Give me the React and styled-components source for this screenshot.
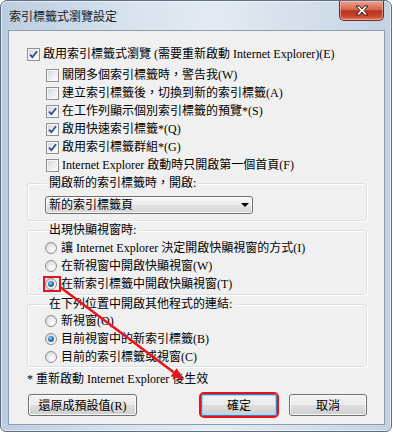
import React from "react";
import styled, { createGlobalStyle, css } from "styled-components";

const UI_FONT = `"Liberation Serif", "Noto Sans CJK TC", serif`;

const GlobalStyle = createGlobalStyle`
  html, body {
    margin: 0;
    padding: 0;
    background: #ffffff;
  }
  body {
    font-family: ${UI_FONT};
    font-size: 12px;
    color: #000;
  }
`;

const Window = styled.div`
  position: relative;
  width: 392px;
  height: 432px;
  box-sizing: border-box;
  border: 1px solid #5d6f83;
  border-radius: 7px 7px 6px 6px;
  background: linear-gradient(
    to right,
    #bccde0 0%,
    #d9e4ef 35%,
    #e3eaf2 55%,
    #d2deea 80%,
    #c2d2e4 100%
  );
  box-shadow: inset 0 0 0 1px rgba(255, 255, 255, 0.55);
  display: flex;
  flex-direction: column;
`;

const TitleBar = styled.div`
  height: 29px;
  display: flex;
  align-items: center;
  padding: 0 7px 0 8px;
`;

const TitleText = styled.span`
  flex: 1;
  font-family: "Noto Sans CJK TC", sans-serif;
  font-size: 12px;
  line-height: 16px;
  color: #1a1a1a;
`;

const CloseButton = styled.div`
  align-self: flex-start;
  width: 45px;
  height: 20px;
  box-sizing: border-box;
  border: 1px solid #6e2b22;
  border-top: none;
  border-radius: 0 0 5px 5px;
  background: linear-gradient(
    #eaa491 0%,
    #d5644d 45%,
    #b9341e 52%,
    #c8462d 80%,
    #de7d60 100%
  );
  box-shadow: inset 0 0 0 1px rgba(255, 210, 190, 0.5);
  display: flex;
  align-items: center;
  justify-content: center;
`;

const ClientArea = styled.div`
  flex: 1;
  margin: 0 6px 6px 7px;
  border: 1px solid #8d9db0;
  background: #f0f0f0;
  padding: 14px 17px 0 18px;
  display: flex;
  flex-direction: column;
  font-family: ${UI_FONT};
  font-size: 12px;
`;

const CheckRow = styled.div`
  display: flex;
  align-items: center;
  height: 18px;
  line-height: 18px;
  white-space: nowrap;
  padding-left: ${(p) => (p.$sub ? 19 : 0)}px;
  margin-bottom: ${(p) => (p.$main ? 3 : 0)}px;
`;

const CheckBox = styled.span`
  width: 13px;
  height: 13px;
  box-sizing: border-box;
  flex-shrink: 0;
  margin-right: 3px;
  border: 1px solid #8e8f8f;
  background: linear-gradient(135deg, #cfd3d8 0%, #e9ebee 50%, #fdfdfd 100%);
  box-shadow: inset 0 0 0 1px #f6f6f6;
  display: flex;
  align-items: center;
  justify-content: center;
`;

const Group = styled.fieldset`
  margin: 2px 0 0 0;
  padding: ${(p) => p.$pad};
  border: 1px solid #d9e1e6;
  border-radius: 3px;
  box-shadow: 1px 1px 0 #ffffff, inset 1px 1px 0 #ffffff;
  min-width: 0;
`;

const Legend = styled.legend`
  margin-left: 2px;
  padding: 0 2px;
  height: 14px;
  line-height: 14px;
  background: #f0f0f0;
  white-space: nowrap;
`;

const Dropdown = styled.div`
  width: 208px;
  height: 18px;
  box-sizing: border-box;
  border: 1px solid #707070;
  border-radius: 3px;
  background: linear-gradient(#f6f6f6 0%, #ededed 50%, #e2e2e2 51%, #d6d6d6 100%);
  box-shadow: inset 0 0 0 1px rgba(255, 255, 255, 0.75);
  display: flex;
  align-items: center;
  padding: 0 3px 0 3px;
  line-height: 16px;
`;

const DropdownText = styled.span`
  flex: 1;
`;

const DropArrow = styled.span`
  width: 0;
  height: 0;
  border-left: 4px solid transparent;
  border-right: 4px solid transparent;
  border-top: 4px solid #000;
`;

const RadioRow = styled.div`
  display: flex;
  align-items: center;
  height: 18px;
  line-height: 18px;
  white-space: nowrap;
`;

const RadioWrap = styled.span`
  position: relative;
  display: flex;
  margin-right: 4px;
  flex-shrink: 0;
`;

const Radio = styled.span`
  position: relative;
  width: 12px;
  height: 12px;
  box-sizing: border-box;
  border-radius: 50%;
  border: 1px solid #8e8f8f;
  background: radial-gradient(circle at 65% 70%, #ffffff 0%, #ececec 45%, #cacaca 100%);
  ${(p) =>
    p.$checked &&
    css`
      &::after {
        content: "";
        position: absolute;
        left: 2px;
        top: 2px;
        width: 6px;
        height: 6px;
        border-radius: 50%;
        background: radial-gradient(circle at 40% 35%, #9ad6f7 0%, #2b7bb9 45%, #0d3f6a 100%);
      }
    `}
`;

const MarkBox = styled.span`
  position: absolute;
  left: -2px;
  top: -2px;
  width: 18px;
  height: 16px;
  box-sizing: border-box;
  border: 2px solid #e8101a;
`;

const Note = styled.div`
  margin-top: 3px;
  height: 18px;
  line-height: 18px;
  white-space: nowrap;
`;

const ButtonRow = styled.div`
  margin-top: 6px;
  display: flex;
  align-items: center;
  padding-left: 1px;
`;

const Button = styled.button`
  width: ${(p) => p.$w}px;
  height: 22px;
  box-sizing: border-box;
  padding: 0;
  border: 1px solid #707070;
  border-radius: 3px;
  background: linear-gradient(#f2f2f2 0%, #ebebeb 50%, #dddddd 51%, #cfcfcf 100%);
  box-shadow: inset 0 0 0 1px #fbfbfb;
  font-family: ${UI_FONT};
  font-size: 12px;
  color: #000;
  margin-left: ${(p) => p.$ml || 0}px;
  ${(p) =>
    p.$default &&
    css`
      border-color: #3c7fb1;
      box-shadow: inset 0 0 0 1px #9fdcf7;
    `}
  ${(p) =>
    p.$marked &&
    css`
      outline: 2px solid #e8101a;
      outline-offset: 0;
    `}
`;

const Overlay = styled.svg`
  position: absolute;
  left: -1px;
  top: -1px;
  pointer-events: none;
`;

const Tick = () => (
  <svg width="9" height="9" viewBox="0 0 9 9">
    <path d="M1 4.6 L3.4 7.2 L8 1.2" fill="none" stroke="#2f4c8c" strokeWidth="1.8" />
  </svg>
);

const Check = ({ checked, sub, main, children }) => (
  <CheckRow $sub={sub} $main={main}>
    <CheckBox>{checked && <Tick />}</CheckBox>
    <span>{children}</span>
  </CheckRow>
);

const RadioItem = ({ checked, marked, children }) => (
  <RadioRow>
    <RadioWrap>
      <Radio $checked={checked} />
      {marked && <MarkBox />}
    </RadioWrap>
    <span>{children}</span>
  </RadioRow>
);

export default function App() {
  return (
    <>
      <GlobalStyle />
      <Window>
        <TitleBar>
          <TitleText>索引標籤式瀏覽設定</TitleText>
          <CloseButton>
            <svg width="14" height="11" viewBox="0 0 14 11">
              <path
                d="M1 1h3.5L7 4l2.5-3H13L9 5.5 13 10H9.5L7 7l-2.5 3H1l4-4.5z"
                fill="#fff"
                stroke="#3b1b14"
                strokeWidth="1"
                strokeLinejoin="round"
              />
            </svg>
          </CloseButton>
        </TitleBar>
        <ClientArea>
          <Check checked main>
            啟用索引標籤式瀏覽 (需要重新啟動 Internet Explorer)(E)
          </Check>
          <Check sub>關閉多個索引標籤時，警告我(W)</Check>
          <Check sub>建立索引標籤後，切換到新的索引標籤(A)</Check>
          <Check sub checked>在工作列顯示個別索引標籤的預覽*(S)</Check>
          <Check sub checked>啟用快速索引標籤*(Q)</Check>
          <Check sub checked>啟用索引標籤群組*(G)</Check>
          <Check sub>Internet Explorer 啟動時只開啟第一個首頁(F)</Check>

          <Group $pad="6px 0 6px 17px">
            <Legend>開啟新的索引標籤時，開啟:</Legend>
            <Dropdown>
              <DropdownText>新的索引標籤頁</DropdownText>
              <DropArrow />
            </Dropdown>
          </Group>

          <Group $pad="2px 0 1px 17px">
            <Legend>出現快顯視窗時:</Legend>
            <RadioItem>讓 Internet Explorer 決定開啟快顯視窗的方式(I)</RadioItem>
            <RadioItem>在新視窗中開啟快顯視窗(W)</RadioItem>
            <RadioItem checked marked>在新索引標籤中開啟快顯視窗(T)</RadioItem>
          </Group>

          <Group $pad="1px 0 0 17px">
            <Legend>在下列位置中開啟其他程式的連結:</Legend>
            <RadioItem>新視窗(O)</RadioItem>
            <RadioItem checked>目前視窗中的新索引標籤(B)</RadioItem>
            <RadioItem>目前的索引標籤或視窗(C)</RadioItem>
          </Group>

          <Note>* 重新啟動 Internet Explorer 後生效</Note>

          <ButtonRow>
            <Button $w={109}>還原成預設值(R)</Button>
            <Button $w={76} $ml={64} $default $marked>確定</Button>
            <Button $w={78} $ml={12}>取消</Button>
          </ButtonRow>
        </ClientArea>

        <Overlay width="392" height="432" viewBox="0 0 392 432">
          <line x1="60" y1="287" x2="173.6" y2="372.2" stroke="#e8141c" strokeWidth="2.5" />
          <polygon points="184,380 170.6,376.2 176.6,368.2" fill="#e8141c" />
        </Overlay>
      </Window>
    </>
  );
}
